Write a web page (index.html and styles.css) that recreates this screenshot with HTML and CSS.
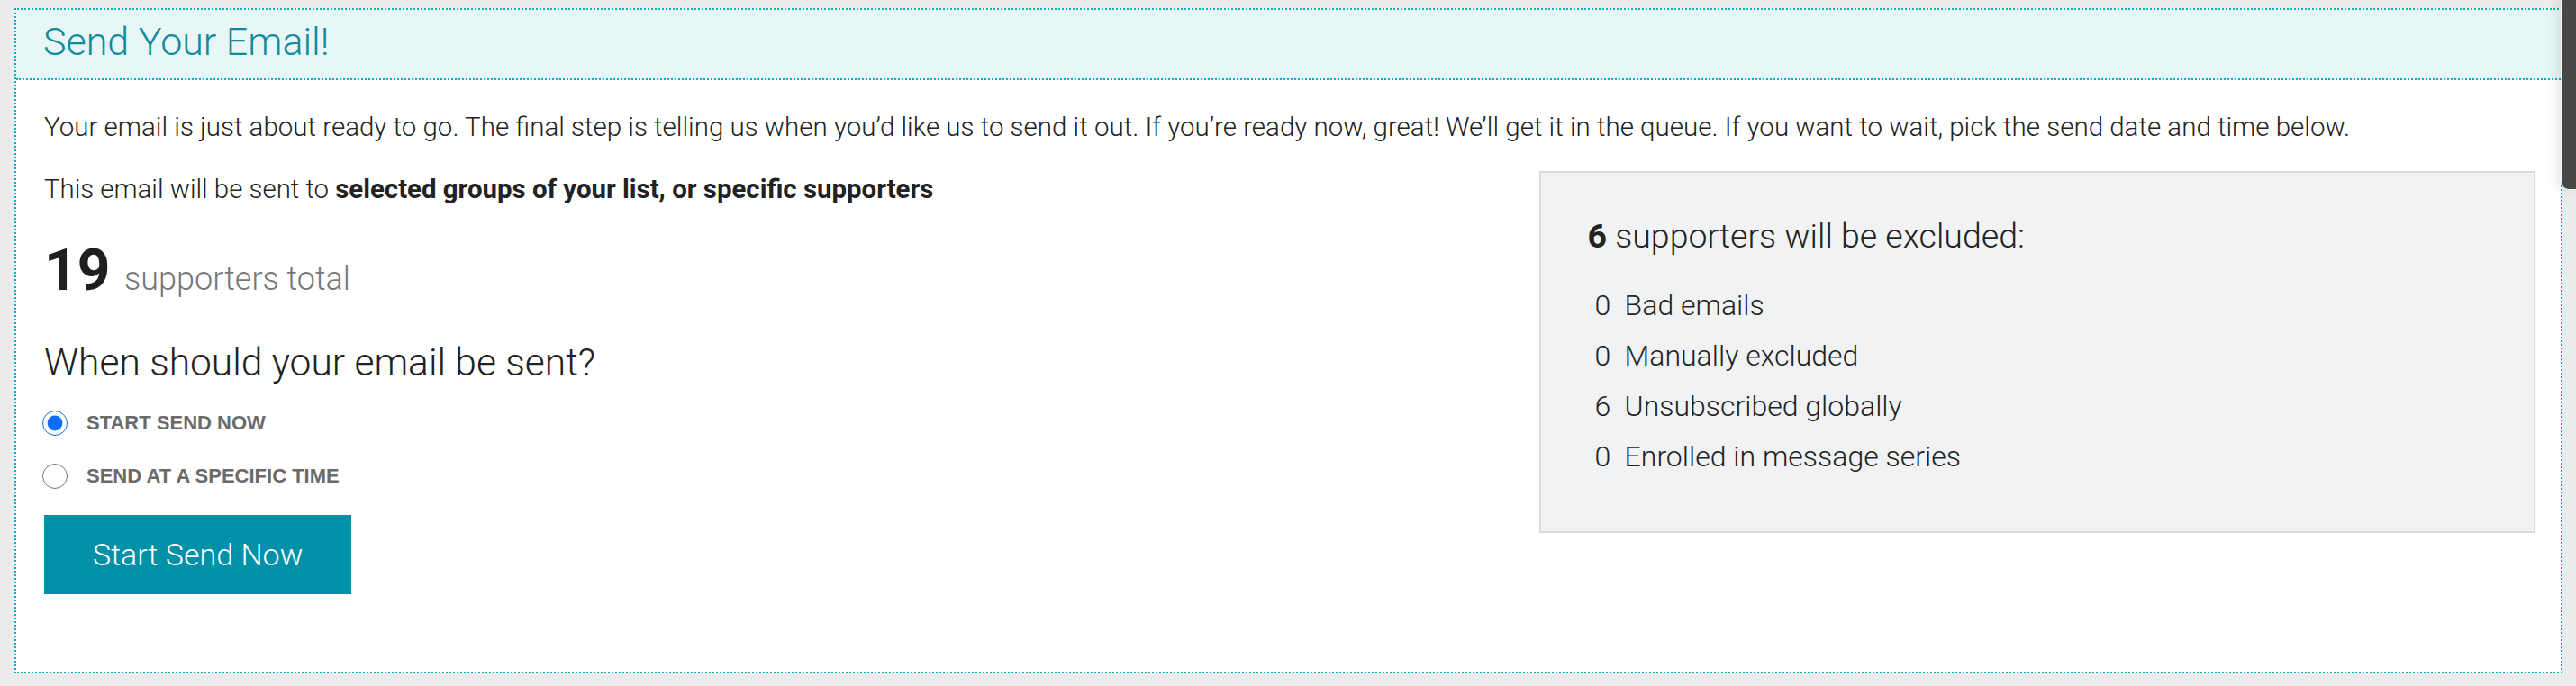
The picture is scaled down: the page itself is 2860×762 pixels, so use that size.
FILE: index.html
```html
<!DOCTYPE html>
<html lang="en">
<head>
<meta charset="utf-8">
<title>Send Your Email!</title>
<link rel="stylesheet" href="styles.css">
</head>
<body>
<section class="panel">
  <header class="panel-header">
    <h1 class="panel-title">Send Your Email!</h1>
  </header>
  <div class="panel-body">
    <p class="intro">Your email is just about ready to go. The final step is telling us when you’d like us to send it out. If you’re ready now, great! We’ll get it in the queue. If you want to wait, pick the send date and time below.</p>
    <div class="columns">
      <div class="col-main">
        <p class="recipients">This email will be sent to <strong>selected groups of your list, or specific supporters</strong></p>
        <div class="total"><strong>19</strong> <span class="total-label">supporters total</span></div>
        <h2 class="question">When should your email be sent?</h2>
        <label class="option"><input type="radio" name="when" checked><span>START SEND NOW</span></label>
        <label class="option"><input type="radio" name="when"><span>SEND AT A SPECIFIC TIME</span></label>
        <button class="btn-send" type="button">Start Send Now</button>
      </div>
      <aside class="col-side">
        <div class="excluded">
          <h3 class="excluded-title"><strong>6</strong> supporters will be excluded:</h3>
          <ul class="excluded-list">
            <li><span class="num">0</span><span>Bad emails</span></li>
            <li><span class="num">0</span><span>Manually excluded</span></li>
            <li><span class="num">6</span><span>Unsubscribed globally</span></li>
            <li><span class="num">0</span><span>Enrolled in message series</span></li>
          </ul>
        </div>
      </aside>
    </div>
  </div>
</section>
<div class="scroll-thumb"></div>
</body>
</html>
```
FILE: styles.css
```css
html, body {
  height: 762px;
  overflow: hidden;
}
body {
  margin: 9px 15px 0 16px;
  background: #ececec;
  font-family: Roboto, "Liberation Sans", Arial, sans-serif;
  font-weight: 300;
  color: #222;
}
.panel {
  border: 2px dotted #00aec2;
  background: #fff;
}
.panel-header {
  background: #e7f7f7;
  border-bottom: 2px dotted #00aec2;
  padding: 0 30px 6px;
}
.panel-title {
  margin: 0;
  font-size: 43px;
  line-height: 70px;
  font-weight: 300;
  color: #128b9b;
}
.panel-body {
  padding: 32px 28px 86px 31px;
}
.intro {
  margin: 0 0 29px;
  font-size: 29.5px;
  line-height: 40px;
  white-space: nowrap;
}
.columns {
  display: grid;
  grid-template-columns: 3fr 2fr;
  align-items: start;
}
.recipients {
  margin: 0;
  font-size: 29.4px;
  line-height: 40px;
}
.recipients strong {
  font-weight: 700;
}
.total {
  margin-top: 33px;
  font-size: 64px;
  line-height: 76px;
}
.total strong {
  font-weight: 700;
  color: #1f1f1f;
}
.total-label {
  font-size: 36px;
  line-height: 1;
  color: #777;
}
.question {
  margin: 40px 0 0;
  font-size: 42.5px;
  line-height: 48px;
  font-weight: 300;
  color: #222;
}
.option {
  display: flex;
  align-items: center;
  gap: 21px;
  height: 40px;
  margin-top: 23px;
  font-family: "Liberation Sans", Arial, sans-serif;
  font-weight: 700;
  font-size: 22px;
  color: #6a6a6a;
}
.option + .option {
  margin-top: 19px;
}
.option input {
  width: 28px;
  height: 28px;
  margin: 0 0 0 -2px;
  accent-color: #0b6ef5;
}
.btn-send {
  display: block;
  margin-top: 23px;
  padding: 0 54px;
  height: 88px;
  border: 0;
  background: #0090a8;
  color: #fff;
  font-family: Roboto, "Liberation Sans", Arial, sans-serif;
  font-weight: 300;
  font-size: 34px;
  line-height: 88px;
}
.excluded {
  background: #f1f2f4;
  border: 2px solid #dadada;
  padding: 46px 40px 55px 52px;
}
.excluded-title {
  margin: 0;
  font-size: 37.5px;
  line-height: 48px;
  font-weight: 300;
  color: #222;
}
.excluded-title strong {
  font-weight: 700;
}
.excluded-list {
  list-style: none;
  margin: 25px 0 0;
  padding: 0 0 0 8px;
  font-size: 32px;
  line-height: 56px;
  color: #222;
}
.excluded-list li {
  display: flex;
  gap: 15px;
}
.num {
  min-width: 18px;
}
.scroll-thumb {
  position: fixed;
  top: 0;
  right: 0;
  width: 16px;
  height: 210px;
  background: #474747;
  border-left: 1px solid #f4f4f4;
  border-bottom: 1px solid #f4f4f4;
  border-radius: 0 0 0 9px;
  box-shadow: -4px 0 12px rgba(0, 0, 0, 0.10);
}
```
